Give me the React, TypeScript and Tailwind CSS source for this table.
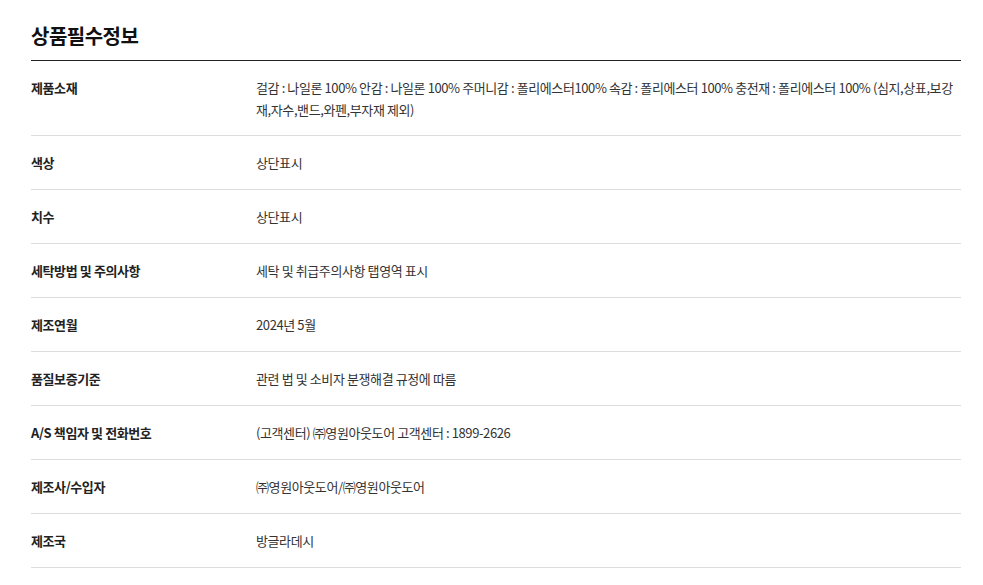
const rows: { label: string; value: string }[] = [
  {
    label: "제품소재",
    value:
      "걸감 : 나일론 100% 안감 : 나일론 100% 주머니감 : 폴리에스터100% 속감 : 폴리에스터 100% 충전재 : 폴리에스터 100% (심지,상표,보강재,자수,밴드,와펜,부자재 제외)",
  },
  { label: "색상", value: "상단표시" },
  { label: "치수", value: "상단표시" },
  { label: "세탁방법 및 주의사항", value: "세탁 및 취급주의사항 탭영역 표시" },
  { label: "제조연월", value: "2024년 5월" },
  { label: "품질보증기준", value: "관련 법 및 소비자 분쟁해결 규정에 따름" },
  { label: "A/S 책임자 및 전화번호", value: "(고객센터) ㈜영원아웃도어 고객센터 : 1899-2626" },
  { label: "제조사/수입자", value: "㈜영원아웃도어/㈜영원아웃도어" },
  { label: "제조국", value: "방글라데시" },
];

export default function App() {
  return (
    <div className="min-h-screen bg-white font-['Noto_Sans_CJK_KR',sans-serif] text-[#222]">
      <div className="ml-[31px] w-[930px]">
        <h2 className="pt-[22px] pb-[10px] text-[20px] font-bold leading-[28px] tracking-[-0.5px] text-[#111]">
          상품필수정보
        </h2>
        <div className="border-t border-[#222]">
          {rows.map((row) => (
            <div
              key={row.label}
              className="flex border-b border-[#ddd] pt-4 pb-[15px] text-[13px] leading-[22px] tracking-[-0.4px] first:pb-[14px]"
            >
              <div className="w-[225px] shrink-0 font-bold text-[#222]">{row.label}</div>
              <div className="flex-1 pr-2 break-all text-[#333]">{row.value}</div>
            </div>
          ))}
        </div>
      </div>
    </div>
  );
}
